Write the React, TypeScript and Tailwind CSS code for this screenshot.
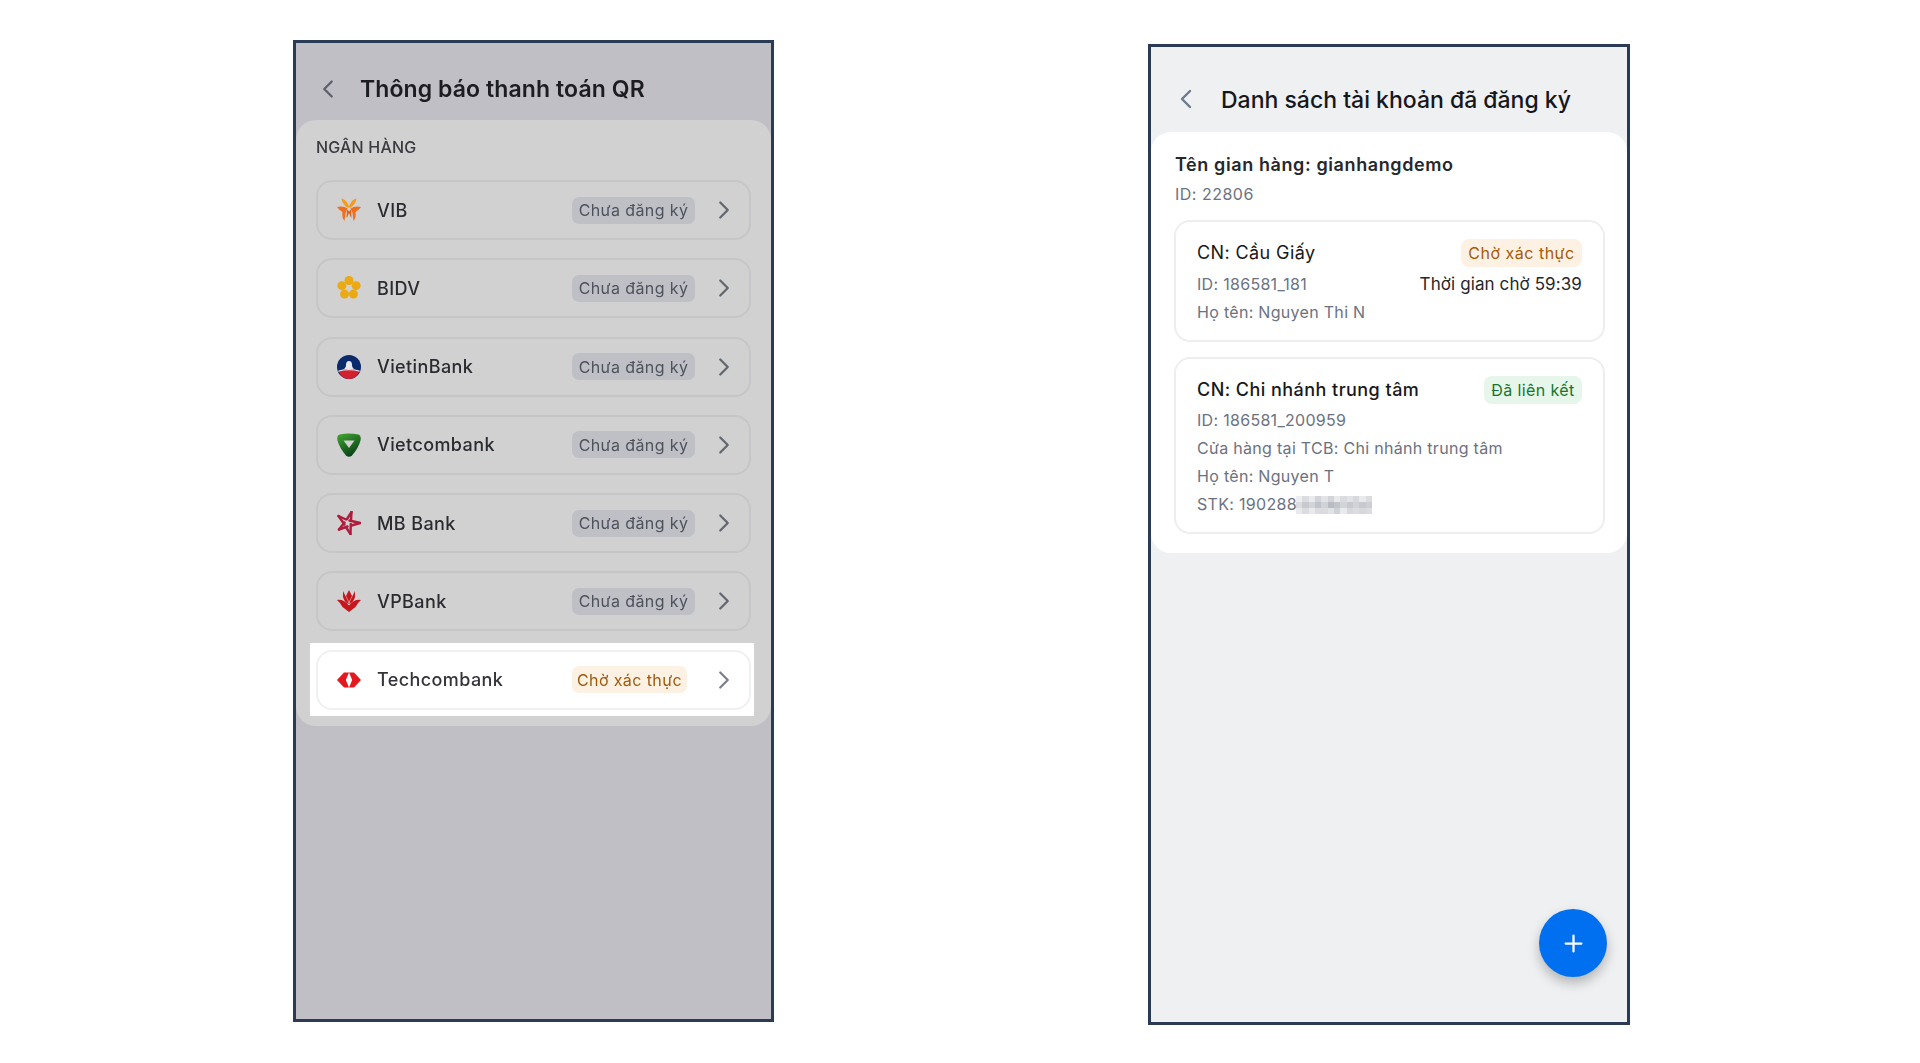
import { ChevronLeft, ChevronRight, Plus } from "lucide-react";
import type { ReactNode } from "react";

function VibLogo() {
  return (
    <svg width="24" height="24" viewBox="0 0 24 24">
      <path d="M4.5 0.5 Q9 1.5 11 6.5 L12 8 L13 6.5 Q15 1.5 19.5 0.5 Q19 5.5 14 9.5 L10 9.5 Q5 5.5 4.5 0.5Z" fill="#f59a1b" />
      <path d="M0 9 Q6 7.5 10.5 10.5 L8.5 15 L7.5 23 Q4.5 19 5.5 14 Q2.5 12.5 0 9Z" fill="#f06f1d" />
      <path d="M24 9 Q18 7.5 13.5 10.5 L15.5 15 L16.5 23 Q19.5 19 18.5 14 Q21.5 12.5 24 9Z" fill="#f06f1d" />
      <path d="M10 11.5 L12 13.5 L14 11.5 L14.5 20 Q12.8 18 12.4 15.5 L11.6 15.5 Q11.2 18 9.5 20Z" fill="#e2620f" />
    </svg>
  );
}

function BidvLogo() {
  return (
    <svg width="24" height="24" viewBox="0 0 24 24" fill="#eba912">
      <circle cx="12" cy="4.5" r="4.5" />
      <circle cx="19.13" cy="9.68" r="4.5" />
      <circle cx="16.41" cy="18.07" r="4.5" />
      <circle cx="7.59" cy="18.07" r="4.5" />
      <circle cx="4.87" cy="9.68" r="4.5" />
    </svg>
  );
}

function VietinLogo() {
  return (
    <svg width="24" height="24" viewBox="0 0 24 24">
      <circle cx="12" cy="12" r="12" fill="#0a2a6b" />
      <path d="M1.5 16 Q12 13 22.5 16 Q19.5 24 12 24 Q4.5 24 1.5 16Z" fill="#d3202e" />
      <path d="M4.5 15 Q9 14 9 10 Q9 6 12 6 Q15 6 15 10 Q15 14 19.5 15 Q12 13 4.5 15Z" fill="#e8e8ec" />
      <path d="M1.5 15.5 Q12 12.5 22.5 15.5 L22.8 16.7 Q12 14 1.2 16.7Z" fill="#e8e8ec" />
    </svg>
  );
}

function VietcomLogo() {
  return (
    <svg width="24" height="24" viewBox="0 0 24 24">
      <defs>
        <linearGradient id="vcb" x1="0" y1="0" x2="0.5" y2="1">
          <stop offset="0" stopColor="#43a82f" />
          <stop offset="1" stopColor="#0a431b" />
        </linearGradient>
      </defs>
      <path d="M2.5 1.5 Q12 -0.5 21.5 1.5 Q24.5 2.5 23.5 7.5 Q21.5 15 15 22.5 Q12 25 9 22.5 Q2.5 15 0.5 7.5 Q-0.5 2.5 2.5 1.5Z" fill="url(#vcb)" />
      <path d="M6.5 7.5 L17.5 7.5 L12 15Z" fill="#d1d1d1" />
    </svg>
  );
}

function MbLogo() {
  return (
    <svg width="24" height="24" viewBox="0 0 24 24" fill="none" stroke="#b01c3c" strokeWidth="2.4" strokeLinecap="round">
      <path d="M1.5 5 L9 8.5 M12.5 9.5 L23 12" />
      <path d="M23 12 L14.5 14.5 M10.5 15.5 L2 18.5" />
      <path d="M2 18.5 L7.5 11.5 M10 8 L14.5 1" />
      <path d="M14.5 1 L14 9.5 M13.8 13 L13.5 23" />
      <path d="M13.5 23 L9.5 17 M7.5 13.5 L1.5 5" />
    </svg>
  );
}

function VpLogo() {
  return (
    <svg width="24" height="24" viewBox="0 0 24 24" fill="#c8161d">
      <path d="M12 1 L15 7 L12 13 L9 7Z" />
      <path d="M6 2 L10.5 11 L12 15 Q7.5 13.5 6 8Z" />
      <path d="M18 2 L13.5 11 L12 15 Q16.5 13.5 18 8Z" />
      <path d="M0 11 Q7 10 12 16.5 Q17 10 24 11 Q20.5 14 18.5 18 L12 23 L5.5 18 Q3.5 14 0 11Z" />
    </svg>
  );
}

function TcbLogo() {
  return (
    <svg width="24" height="24" viewBox="0 0 24 24" fill="#e4181f">
      <path d="M0 12 L7 4.5 L12 4.5 L8.8 12 L12 19.5 L7 19.5Z" />
      <path d="M24 12 L17 4.5 L12 4.5 L15.2 12 L12 19.5 L17 19.5Z" />
    </svg>
  );
}

const banks: { name: string; logo: ReactNode }[] = [
  { name: "VIB", logo: <VibLogo /> },
  { name: "BIDV", logo: <BidvLogo /> },
  { name: "VietinBank", logo: <VietinLogo /> },
  { name: "Vietcombank", logo: <VietcomLogo /> },
  { name: "MB Bank", logo: <MbLogo /> },
  { name: "VPBank", logo: <VpLogo /> },
];

// censored digits of the account number
const mosaic = [
  [0.12, 0.25, 0.15, 0.3, 0.2, 0.3, 0.15, 0.25, 0.2, 0.28, 0.15, 0.25],
  [0.25, 0.38, 0.3, 0.42, 0.32, 0.48, 0.42, 0.3, 0.38, 0.32, 0.38, 0.34],
  [0.15, 0.25, 0.15, 0.25, 0.25, 0.2, 0.32, 0.15, 0.28, 0.25, 0.28, 0.25],
];

export default function App() {
  return (
    <div className="flex h-[1063px] w-full items-start bg-white pl-[293px] font-['Inter',sans-serif]">
      {/* Left phone, dimmed */}
      <div className="mt-[40px] flex h-[982px] w-[481px] flex-col border-[3px] border-[#2b3a55] bg-[#c0bfc5]">
        <div className="flex flex-col blur-[0.6px]">
          <div className="flex h-[77px] items-center pl-[24px] pt-[15px]">
            <ChevronLeft className="ml-[-7px] h-[30px] w-[30px] text-[#5b606b]" strokeWidth={1.8} />
            <span className="ml-[17px] text-[23px] font-semibold leading-[30px] tracking-[0.1px] text-[#1c1d21]">
              Thông báo thanh toán QR
            </span>
          </div>
          <div className="flex flex-col rounded-[20px] bg-[#d1d1d1] px-[20px] pb-[16px]">
            <span className="mt-[16px] text-[16px] font-medium leading-[22px] tracking-[0.2px] text-[#3a3b40]">NGÂN HÀNG</span>
            <div className="mt-[22px] flex flex-col gap-[18.3px]">
              {banks.map((b) => (
                <div
                  key={b.name}
                  className="flex h-[60px] items-center rounded-[16px] border-2 border-[#c6c6c8] pl-[19px] pr-[10px]"
                >
                  {b.logo}
                  <span className="ml-[16px] flex-1 text-[18px] font-medium tracking-[0.4px] text-[#2a2b30]">{b.name}</span>
                  <span className="flex h-[27px] w-[123px] items-center justify-center rounded-[7px] bg-[#bfc0c6] text-[16px] tracking-[0.4px] text-[#4e525c]">
                    Chưa đăng ký
                  </span>
                  <ChevronRight className="ml-[14px] h-[30px] w-[30px] text-[#62666f]" strokeWidth={1.8} />
                </div>
              ))}
              <div className="-mb-[6px] -ml-[6px] -mr-[3px] -mt-[7px] bg-white pb-[6px] pl-[6px] pr-[3px] pt-[7px]">
                <div className="flex h-[60px] items-center rounded-[16px] border-2 border-[#eff0f2] pl-[19px] pr-[10px]">
                  <TcbLogo />
                  <span className="ml-[16px] flex-1 text-[18px] font-medium tracking-[0.4px] text-[#33343a]">Techcombank</span>
                  <span className="flex h-[27px] w-[115px] items-center justify-center rounded-[7px] bg-[#fdf1e3] text-[16px] tracking-[0.4px] text-[#a05a0c]">
                    Chờ xác thực
                  </span>
                  <ChevronRight className="ml-[22px] h-[30px] w-[30px] text-[#7b7f88]" strokeWidth={1.8} />
                </div>
              </div>
            </div>
          </div>
        </div>
      </div>

      {/* Right phone */}
      <div className="relative ml-[374px] mt-[44px] flex h-[981px] w-[482px] flex-col border-[3px] border-[#2b3a55] bg-[#eff0f2]">
        <div className="flex h-[85px] items-center pl-[24px] pt-[20px]">
          <ChevronLeft className="ml-[-5px] mt-[-2px] h-[32px] w-[32px] text-[#6b7a8c]" strokeWidth={1.8} />
          <span className="ml-[19px] text-[23px] font-medium leading-[30px] text-[#16171a]">
            Danh sách tài khoản đã đăng ký
          </span>
        </div>
        <div className="flex flex-col rounded-[20px] bg-white pb-[19px] pl-[23px] pr-[22px] pt-[20px]">
          <span className="ml-[1px] text-[18px] font-semibold leading-[26px] tracking-[0.6px] text-[#26272b]">
            Tên gian hàng: gianhangdemo
          </span>
          <span className="ml-[1px] mt-[4px] text-[16px] leading-[24px] tracking-[0.5px] text-[#6b7280]">ID: 22806</span>
          <div className="mt-[14px] flex flex-col gap-[15px]">
            <div className="flex h-[122px] flex-col rounded-[16px] border-2 border-[#eceef0] px-[21px] pt-[17px]">
              <div className="flex items-center justify-between">
                <span className="text-[18px] leading-[28px] tracking-[0.4px] text-[#17181b]">CN: Cầu Giấy</span>
                <span className="flex h-[28px] w-[121px] items-center justify-center rounded-[8px] bg-[#fdf1e3] text-[16px] tracking-[0.5px] text-[#a8590a]">
                  Chờ xác thực
                </span>
              </div>
              <div className="mt-[3px] flex items-center justify-between">
                <span className="text-[16px] leading-[28px] tracking-[0.3px] text-[#6b7280]">ID: 186581_181</span>
                <span className="text-[17px] leading-[28px] tracking-[0.1px] text-[#26272b]">Thời gian chờ 59:39</span>
              </div>
              <span className="text-[16px] leading-[28px] tracking-[0.3px] text-[#6b7280]">Họ tên: Nguyen Thi N</span>
            </div>
            <div className="flex h-[177px] flex-col rounded-[16px] border-2 border-[#eceef0] px-[21px] pt-[17px]">
              <div className="flex items-center justify-between">
                <span className="text-[18px] font-medium leading-[28px] tracking-[0.45px] text-[#17181b]">CN: Chi nhánh trung tâm</span>
                <span className="flex h-[28px] w-[98px] items-center justify-center rounded-[8px] bg-[#e6f6ea] text-[16px] tracking-[0.4px] text-[#14752f]">
                  Đã liên kết
                </span>
              </div>
              <span className="mt-[2px] text-[16px] leading-[28px] tracking-[0.3px] text-[#6b7280]">ID: 186581_200959</span>
              <span className="text-[16px] leading-[28px] tracking-[0.3px] text-[#6b7280]">Cửa hàng tại TCB: Chi nhánh trung tâm</span>
              <span className="text-[16px] leading-[28px] tracking-[0.3px] text-[#6b7280]">Họ tên: Nguyen T</span>
              <div className="flex items-center text-[16px] leading-[29px] tracking-[0.3px] text-[#6b7280]">
                <span>STK: 190288</span>
                <svg className="-ml-[1px]" width="76" height="18" viewBox="0 0 12 3" preserveAspectRatio="none" shapeRendering="crispEdges">
                  {mosaic.map((row, y) =>
                    row.map((o, x) => <rect key={`${x}-${y}`} x={x} y={y} width="1" height="1" fill="#6b7280" opacity={o} />)
                  )}
                </svg>
              </div>
            </div>
          </div>
        </div>
        <button className="absolute bottom-[45px] right-[20px] flex h-[68px] w-[68px] items-center justify-center rounded-full bg-[#0070f0] text-white shadow-[0_6px_12px_rgba(0,0,0,0.25)]">
          <Plus className="h-[27px] w-[27px]" strokeWidth={2} />
        </button>
      </div>
    </div>
  );
}
